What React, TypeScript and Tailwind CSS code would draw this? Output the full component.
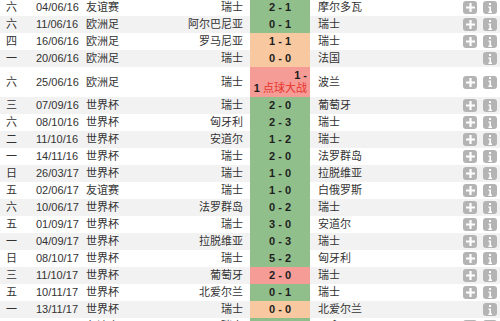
type Result = "win" | "draw" | "loss";

interface Match {
  day: string;
  date: string;
  comp: string;
  home: string;
  score: string;
  away: string;
  result: Result;
  plus?: boolean;
  pens?: boolean;
}

const matches: Match[] = [
  { day: "六", date: "04/06/16", comp: "友谊赛", home: "瑞士", score: "2 - 1", away: "摩尔多瓦", result: "win", plus: true },
  { day: "六", date: "11/06/16", comp: "欧洲足", home: "阿尔巴尼亚", score: "0 - 1", away: "瑞士", result: "win", plus: true },
  { day: "四", date: "16/06/16", comp: "欧洲足", home: "罗马尼亚", score: "1 - 1", away: "瑞士", result: "draw", plus: true },
  { day: "一", date: "20/06/16", comp: "欧洲足", home: "瑞士", score: "0 - 0", away: "法国", result: "draw" },
  { day: "六", date: "25/06/16", comp: "欧洲足", home: "瑞士", score: "1 - 1", away: "波兰", result: "loss", plus: true, pens: true },
  { day: "三", date: "07/09/16", comp: "世界杯", home: "瑞士", score: "2 - 0", away: "葡萄牙", result: "win", plus: true },
  { day: "六", date: "08/10/16", comp: "世界杯", home: "匈牙利", score: "2 - 3", away: "瑞士", result: "win", plus: true },
  { day: "二", date: "11/10/16", comp: "世界杯", home: "安道尔", score: "1 - 2", away: "瑞士", result: "win", plus: true },
  { day: "一", date: "14/11/16", comp: "世界杯", home: "瑞士", score: "2 - 0", away: "法罗群岛", result: "win", plus: true },
  { day: "日", date: "26/03/17", comp: "世界杯", home: "瑞士", score: "1 - 0", away: "拉脱维亚", result: "win", plus: true },
  { day: "五", date: "02/06/17", comp: "友谊赛", home: "瑞士", score: "1 - 0", away: "白俄罗斯", result: "win", plus: true },
  { day: "六", date: "10/06/17", comp: "世界杯", home: "法罗群岛", score: "0 - 2", away: "瑞士", result: "win", plus: true },
  { day: "五", date: "01/09/17", comp: "世界杯", home: "瑞士", score: "3 - 0", away: "安道尔", result: "win", plus: true },
  { day: "一", date: "04/09/17", comp: "世界杯", home: "拉脱维亚", score: "0 - 3", away: "瑞士", result: "win", plus: true },
  { day: "日", date: "08/10/17", comp: "世界杯", home: "瑞士", score: "5 - 2", away: "匈牙利", result: "win", plus: true },
  { day: "三", date: "11/10/17", comp: "世界杯", home: "葡萄牙", score: "2 - 0", away: "瑞士", result: "loss", plus: true },
  { day: "五", date: "10/11/17", comp: "世界杯", home: "北爱尔兰", score: "0 - 1", away: "瑞士", result: "win", plus: true },
  { day: "一", date: "13/11/17", comp: "世界杯", home: "瑞士", score: "0 - 0", away: "北爱尔兰", result: "draw" },
  { day: "五", date: "23/03/18", comp: "友谊赛", home: "瑞士", score: "6 - 0", away: "巴拿马", result: "win", plus: true },
];

const scoreBg: Record<Result, string> = {
  win: "bg-[#91bf8c]",
  draw: "bg-[#f8c9a0]",
  loss: "bg-[#f59c97]",
};

function PlusButton() {
  return (
    <span className="flex h-[13px] w-[14px] items-center justify-center rounded-[3px] bg-[#b4b4b4]">
      <svg width="9" height="9" viewBox="0 0 9 9">
        <path d="M3.4 0h2.2v3.4H9v2.2H5.6V9H3.4V5.6H0V3.4h3.4z" fill="#fff" />
      </svg>
    </span>
  );
}

function InfoButton() {
  return (
    <span className="flex h-[13px] w-[14px] items-center justify-center rounded-[3px] bg-[#b4b4b4]">
      <svg width="4" height="10" viewBox="0 0 4 10">
        <rect x="1" y="0" width="2" height="2" fill="#fff" />
        <path d="M0.4 3.4h2.6v5.2h1V10H0.4V8.6h1V4.8h-1z" fill="#fff" />
      </svg>
    </span>
  );
}

export default function App() {
  return (
    <div className="h-[321px] w-[500px] overflow-hidden bg-white font-['Liberation_Sans','Noto_Sans_CJK_SC',sans-serif] text-[11px] text-[#333]">
      <div className="-mt-px flex flex-col">
        {matches.map((m, i) => (
          <div
            key={i}
            className={`flex items-center ${m.pens ? "h-[30px]" : "h-[17px]"} ${i % 2 === 1 ? "bg-[#f2f2f2]" : "bg-white"}`}
          >
            <div className="w-[36px] pl-[6px]">{m.day}</div>
            <div className="w-[50px]">{m.date}</div>
            <div className="w-[60px]">{m.comp}</div>
            <div className="w-[104px] pr-[7px] text-right">{m.home}</div>
            <div
              className={`flex h-full w-[60px] flex-col justify-center font-bold text-[#1e1e1e] ${scoreBg[m.result]} ${m.pens ? "items-end pr-[3px] leading-[13px]" : "items-center"}`}
            >
              {m.pens ? (
                <>
                  <span>1 -</span>
                  <span>
                    1 <span className="font-normal text-[#e8332b]">点球大战</span>
                  </span>
                </>
              ) : (
                m.score
              )}
            </div>
            <div className="flex-1 pl-[8px]">{m.away}</div>
            <div className="flex items-center gap-[6px] pr-[3px]">
              {m.plus ? <PlusButton /> : <span className="w-[14px]" />}
              <InfoButton />
            </div>
          </div>
        ))}
      </div>
    </div>
  );
}
